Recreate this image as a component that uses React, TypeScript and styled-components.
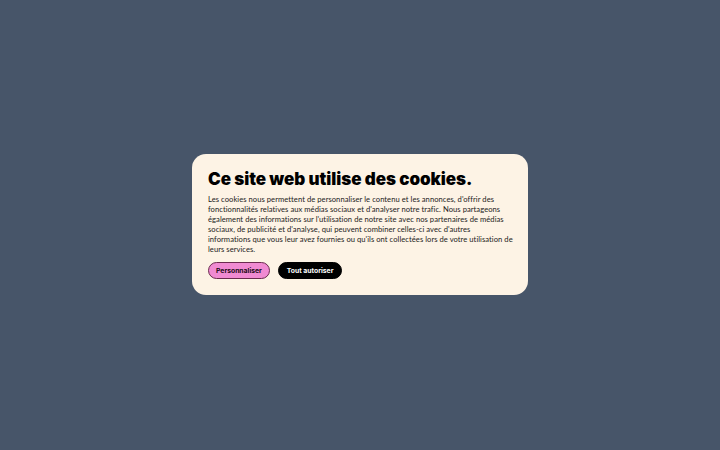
import styled, { createGlobalStyle } from 'styled-components';

const GlobalStyle = createGlobalStyle`
  html, body {
    margin: 0;
    padding: 0;
    height: 100%;
  }
  #root {
    height: 100%;
  }
`;

const Page = styled.div`
  width: 720px;
  height: 450px;
  background-color: #475569;
  display: flex;
  align-items: center;
  justify-content: center;
`;

const Banner = styled.div`
  width: 336px;
  box-sizing: border-box;
  padding: 14px 16px 16px 16px;
  background-color: #fdf3e5;
  border-radius: 14px;
  display: flex;
  flex-direction: column;
  margin-top: -1px;
`;

const Title = styled.h1`
  margin: 0;
  font-family: Inter, 'Liberation Sans', sans-serif;
  font-weight: 900;
  font-size: 17px;
  line-height: 22px;
  letter-spacing: -0.05px;
  color: #000;
`;

const Text = styled.p`
  margin: 4px 0 0 0;
  font-family: Lato, 'Liberation Sans', sans-serif;
  font-size: 7.6px;
  line-height: 10px;
  letter-spacing: 0.05px;
  color: #1c1c1c;
  white-space: nowrap;
`;

const Actions = styled.div`
  display: flex;
  gap: 8px;
  margin-top: 8px;
`;

const ActionButton = styled.button<{ primary?: boolean }>`
  height: 17px;
  padding: 0 ${(props) => (props.primary ? 8 : 7)}px;
  border-radius: 9px;
  border: 1px solid ${(props) => (props.primary ? '#000' : '#6b2b4f')};
  background-color: ${(props) => (props.primary ? '#000' : '#f08ad2')};
  color: ${(props) => (props.primary ? '#fff' : '#1a0a14')};
  font-family: Inter, 'Liberation Sans', sans-serif;
  font-weight: 700;
  font-size: 6.8px;
  cursor: pointer;
`;

const lines = [
  "Les cookies nous permettent de personnaliser le contenu et les annonces, d'offrir des",
  "fonctionnalités relatives aux médias sociaux et d'analyser notre trafic. Nous partageons",
  "également des informations sur l'utilisation de notre site avec nos partenaires de médias",
  "sociaux, de publicité et d'analyse, qui peuvent combiner celles-ci avec d'autres",
  "informations que vous leur avez fournies ou qu'ils ont collectées lors de votre utilisation de",
  'leurs services.',
];

const App = () => {
  return (
    <>
      <GlobalStyle />
      <Page>
        <Banner>
          <Title>Ce site web utilise des cookies.</Title>
          <Text>
            {lines.map((line, i) => (
              <span key={i}>
                {line}
                {i < lines.length - 1 && <br />}
              </span>
            ))}
          </Text>
          <Actions>
            <ActionButton>Personnaliser</ActionButton>
            <ActionButton primary>Tout autoriser</ActionButton>
          </Actions>
        </Banner>
      </Page>
    </>
  );
};

export default App;
